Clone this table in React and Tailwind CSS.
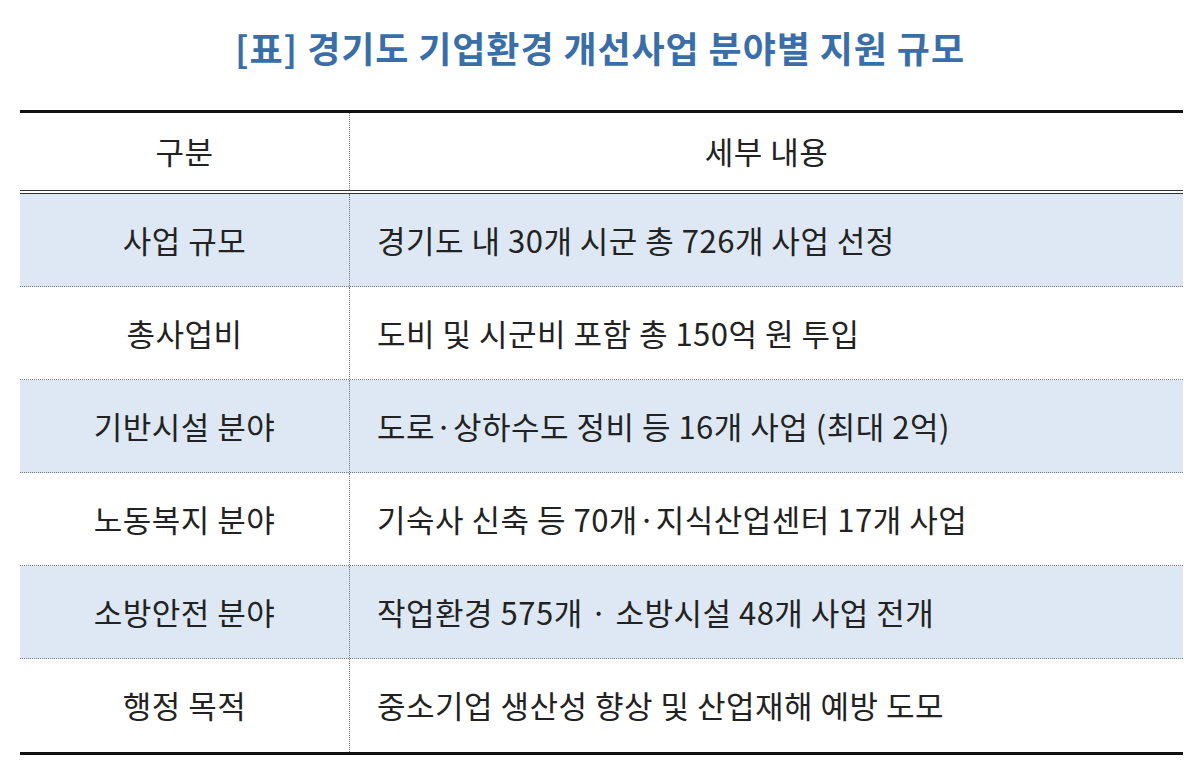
const rows = [
  { label: "사업 규모", text: "경기도 내 30개 시군 총 726개 사업 선정", shaded: true },
  { label: "총사업비", text: "도비 및 시군비 포함 총 150억 원 투입", shaded: false },
  { label: "기반시설 분야", text: "도로·상하수도 정비 등 16개 사업 (최대 2억)", shaded: true },
  { label: "노동복지 분야", text: "기숙사 신축 등 70개·지식산업센터 17개 사업", shaded: false },
  { label: "소방안전 분야", text: "작업환경 575개 · 소방시설 48개 사업 전개", shaded: true },
  { label: "행정 목적", text: "중소기업 생산성 향상 및 산업재해 예방 도모", shaded: false },
];

export default function App() {
  return (
    <div
      className="w-[1200px] h-[767px] bg-white overflow-hidden"
      style={{ fontFamily: '"Noto Sans CJK KR", "Noto Sans", sans-serif' }}
    >
      <h1 className="pt-[22px] h-[110px] text-center text-[36px] leading-[50px] font-bold text-[#3a6ea8] tracking-[0.9px]">
        [표] 경기도 기업환경 개선사업 분야별 지원 규모
      </h1>

      <div className="mx-[20px] w-[1163px] border-t-[3px] border-b-[3px] border-[#111] text-[31px] text-[#222] tracking-[0.5px]">
        {/* header */}
        <div className="flex h-[81px] border-b-[4px] border-double border-[#333]">
          <div className="w-[330px] flex items-center justify-center border-r border-dotted border-[#777]">
            구분
          </div>
          <div className="flex-1 flex items-center justify-center">세부 내용</div>
        </div>

        {rows.map((r, i) => (
          <div
            key={i}
            className={
              "flex h-[93px] " +
              (r.shaded ? "bg-[#dde8f4] " : "bg-white ") +
              (i < rows.length - 1 ? "border-b border-dotted border-[#777]" : "")
            }
          >
            <div className="w-[330px] flex items-center justify-center border-r border-dotted border-[#777]">
              {r.label}
            </div>
            <div className="flex-1 flex items-center pl-[27px]">{r.text}</div>
          </div>
        ))}
      </div>
    </div>
  );
}
